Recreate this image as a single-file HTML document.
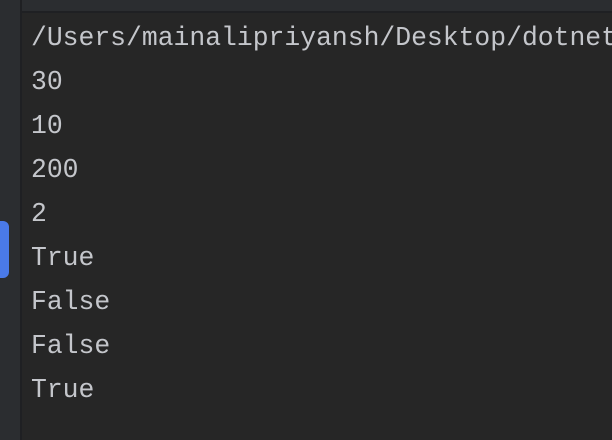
<!DOCTYPE html>
<html><head><meta charset="utf-8"><style>
html,body{margin:0;padding:0;width:612px;height:440px;overflow:hidden;background:#262626;}
.side{position:absolute;left:0;top:0;width:20px;height:440px;background:#2b2d30;border-right:2px solid #1f2023;}
.top{position:absolute;left:22px;top:0;right:0;height:11px;background:#2b2d30;border-bottom:2px solid #1f2023;}
.pill{position:absolute;left:0;top:221px;width:9px;height:57px;background:#4a7ae8;border-radius:0 6px 6px 0;}
pre{position:absolute;left:31px;top:16px;margin:0;font-family:"Liberation Mono",monospace;font-size:26.4px;line-height:44px;color:#c4c6cb;white-space:pre;}
</style></head><body>
<div class="side"></div><div class="top"></div><div class="pill"></div>
<pre>/Users/mainalipriyansh/Desktop/dotnet
30
10
200
2
True
False
False
True</pre>
</body></html>
